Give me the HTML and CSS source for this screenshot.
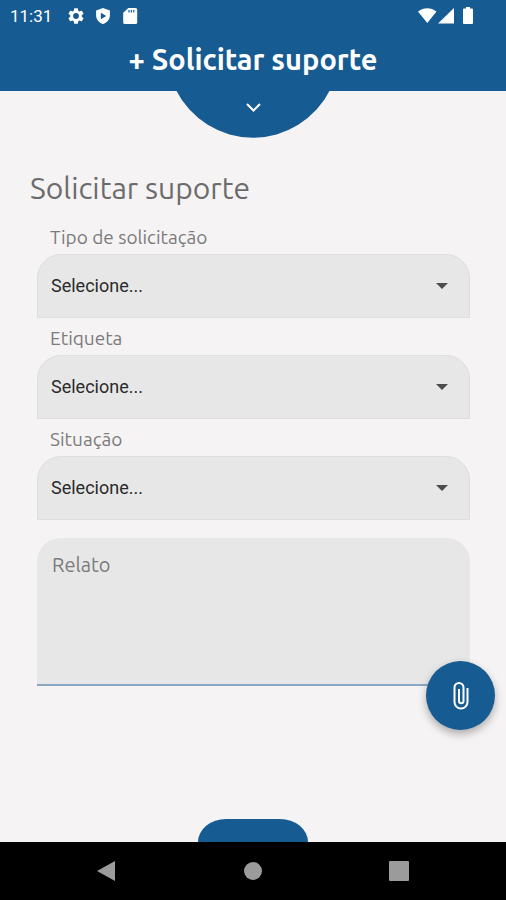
FILE: index.html
```html
<!DOCTYPE html>
<html lang="pt-BR">
<head>
<meta charset="utf-8">
<meta name="viewport" content="width=device-width, initial-scale=1">
<title>Solicitar suporte</title>
<link rel="stylesheet" href="styles.css">
</head>
<body>
<header class="header">
  <div class="status">
    <div class="status-group">
      <span class="clock">11:31</span>
      <svg class="status-icon" viewBox="2 2 20 20" aria-hidden="true"><path d="M19.14 12.94c.04-.3.06-.61.06-.94s-.02-.64-.07-.94l2.03-1.58a.49.49 0 0 0 .12-.61l-1.92-3.32a.49.49 0 0 0-.59-.22l-2.39.96a7 7 0 0 0-1.62-.94L14.4 2.81a.48.48 0 0 0-.48-.41h-3.84a.47.47 0 0 0-.47.41l-.36 2.54a7.4 7.4 0 0 0-1.62.94l-2.39-.96a.48.48 0 0 0-.59.22L2.74 8.87a.47.47 0 0 0 .12.61l2.03 1.58a6 6 0 0 0-.02 1.88l-2.03 1.58a.49.49 0 0 0-.12.61l1.92 3.32c.12.22.37.29.59.22l2.39-.96c.5.38 1.03.7 1.62.94l.36 2.54c.05.24.24.41.48.41h3.84c.24 0 .44-.17.47-.41l.36-2.54a7 7 0 0 0 1.62-.94l2.39.96c.22.08.47 0 .59-.22l1.92-3.32a.47.47 0 0 0-.12-.61zM12 15.6a3.6 3.6 0 1 1 0-7.2 3.6 3.6 0 0 1 0 7.2z"/></svg>
      <svg class="status-icon" viewBox="2 1 20 22" aria-hidden="true"><path fill-rule="evenodd" d="M12 1 2.500 4.500v6.500c0 5.500 4 10.500 9.500 12 5.500-1.500 9.500-6.500 9.500-12V4.500zM9 7.500v9l7.500-4.500z"/></svg>
      <svg class="status-icon" viewBox="2 2 20 20" aria-hidden="true"><path fill-rule="evenodd" d="M19 2h-9L3.500 8v12a2 2 0 0 0 2 2H19a2 2 0 0 0 2-2V4a2 2 0 0 0-2-2zM10 4.500h1.500v3H10zm3 0h1.500v3H13zm3 0h1.500v3H16z"/></svg>
    </div>
    <svg class="signals" viewBox="0 0 56 18" aria-hidden="true"><path d="M0 4.500C5.500 0 13 0 18.500 4.500L9.300 16zM20 16.500 36 1v15.500zM46 1.500h2V0h4v1.500h2q1 0 1 1V16q0 1-1 1h-8q-1 0-1-1V2.500q0-1 1-1z"/></svg>
  </div>
  <h1 class="header-title">+ Solicitar suporte</h1>
  <button class="notch" type="button" aria-label="Expandir">
    <svg viewBox="0 0 154 48" aria-hidden="true"><path class="notch-shape" d="M0 0A86 86 0 0 0 154 0z"/><path class="notch-arrow" d="m71 14 6.500 6.500L84 14"/></svg>
  </button>
</header>
<main class="main">
  <h2 class="title">Solicitar suporte</h2>
  <form class="form">
    <label class="label" for="tipo">Tipo de solicitação</label>
    <div class="field">
      <select class="select" id="tipo"><option>Selecione...</option></select>
      <svg class="caret" viewBox="0 0 12 6" aria-hidden="true"><path d="M0 0h12L6 6z"/></svg>
    </div>
    <label class="label" for="etiqueta">Etiqueta</label>
    <div class="field">
      <select class="select" id="etiqueta"><option>Selecione...</option></select>
      <svg class="caret" viewBox="0 0 12 6" aria-hidden="true"><path d="M0 0h12L6 6z"/></svg>
    </div>
    <label class="label" for="situacao">Situação</label>
    <div class="field">
      <select class="select" id="situacao"><option>Selecione...</option></select>
      <svg class="caret" viewBox="0 0 12 6" aria-hidden="true"><path d="M0 0h12L6 6z"/></svg>
    </div>
    <div class="report">
      <textarea class="textarea" aria-label="Relato" placeholder="Relato"></textarea>
      <button class="fab" type="button" aria-label="Anexar arquivo">
        <svg viewBox="0 0 16 28" aria-hidden="true"><path d="M14.500 6v14a6.500 6.500 0 0 1-13 0V5.500a4.500 4.500 0 0 1 9 0V19a2.200 2.200 0 0 1-4.500 0V7"/></svg>
      </button>
    </div>
  </form>
  <button class="tab" type="button" aria-label="Enviar"></button>
</main>
<nav class="nav" aria-label="Sistema">
  <button class="nav-button" type="button" aria-label="Voltar"><svg viewBox="0 0 22 22"><path d="M1 11 19 1v20z"/></svg></button>
  <button class="nav-button" type="button" aria-label="Início"><svg viewBox="0 0 22 22"><circle cx="11" cy="11" r="9"/></svg></button>
  <button class="nav-button" type="button" aria-label="Recentes"><svg viewBox="0 0 22 22"><rect x="1" y="1" width="20" height="20" rx="1"/></svg></button>
</nav>
</body>
</html>
```
FILE: styles.css
```css
* {
  box-sizing: border-box;
}

body {
  margin: 0;
  min-height: 100vh;
  display: flex;
  flex-direction: column;
  background: #f5f3f4;
  color: #6c6b6c;
  font-family: Ubuntu, "Noto Sans", sans-serif;
}

button {
  padding: 0;
  border: 0;
  background: none;
}

svg {
  display: block;
}

.header {
  position: relative;
  padding-bottom: 12px;
  background: #175b93;
  color: #fff;
}

.status {
  display: flex;
  justify-content: space-between;
  align-items: center;
  height: 32px;
  padding: 0 32px 0 10px;
}

.status-group {
  display: flex;
  align-items: center;
  gap: 11px;
}

.clock {
  margin-right: 5px;
  font: 17px/20px Roboto, sans-serif;
}

.status-icon {
  width: 16px;
  height: 16px;
  fill: #fff;
}

.signals {
  width: 56px;
  height: 18px;
  fill: #fff;
}

.header-title {
  margin: 0;
  padding-top: 8px;
  text-align: center;
  font-size: 29px;
  font-weight: 600;
  line-height: 39px;
}

.notch {
  position: absolute;
  top: 100%;
  left: 50%;
  width: 154px;
  margin: -1px 0 0 -77px;
}

.notch-shape {
  fill: #175b93;
}

.notch-arrow {
  fill: none;
  stroke: #fff;
  stroke-width: 2;
}

.main {
  flex: 1;
  display: flex;
  flex-direction: column;
  padding-top: 77px;
}

.title {
  margin: 0 30px;
  font-size: 30px;
  font-weight: 400;
  line-height: 40px;
}

.form {
  display: flex;
  flex-direction: column;
  padding: 9px 36px 0 37px;
}

.label {
  padding: 8px 13px 5px;
  font-size: 19px;
  line-height: 24px;
  color: #7c7b7c;
}

.field {
  position: relative;
}

.select {
  display: block;
  width: 100%;
  height: 64px;
  padding: 0 48px 2px 13px;
  border: 1px solid #dedede;
  border-radius: 24px 24px 0 0;
  appearance: none;
  background: #e7e7e7;
  color: #2b2b2b;
  font: 18px Roboto, sans-serif;
}

.caret {
  position: absolute;
  top: 29px;
  right: 22px;
  width: 12px;
  height: 6px;
  fill: #4c4c4c;
}

.report {
  position: relative;
  margin-top: 18px;
}

.textarea {
  display: block;
  width: 100%;
  height: 148px;
  padding: 13px 15px;
  border: 0;
  border-bottom: 2px solid #8ba8c2;
  border-radius: 24px 24px 0 0;
  resize: none;
  background: #e7e7e7;
  color: #2b2b2b;
  font: 20px/28px Ubuntu, "Noto Sans", sans-serif;
}

.textarea::placeholder {
  color: #7c7b7c;
  opacity: 1;
}

.fab {
  position: absolute;
  right: -25px;
  bottom: -44px;
  display: grid;
  place-items: center;
  width: 69px;
  height: 69px;
  border-radius: 50%;
  background: #175b93;
  box-shadow: 0 4px 8px rgb(0 0 0 / 30%);
}

.fab svg {
  width: 16px;
  height: 28px;
  fill: none;
  stroke: #fff;
  stroke-width: 2;
}

.tab {
  align-self: center;
  width: 110px;
  height: 23px;
  margin-top: auto;
  border-radius: 28px 28px 0 0 / 23px 23px 0 0;
  background: #175b93;
}

.nav {
  display: flex;
  height: 58px;
  padding: 0 34px;
  background: #000;
}

.nav-button {
  flex: 1;
  display: grid;
  place-items: center;
}

.nav-button svg {
  width: 22px;
  height: 22px;
  fill: #9b9b9b;
}
```
